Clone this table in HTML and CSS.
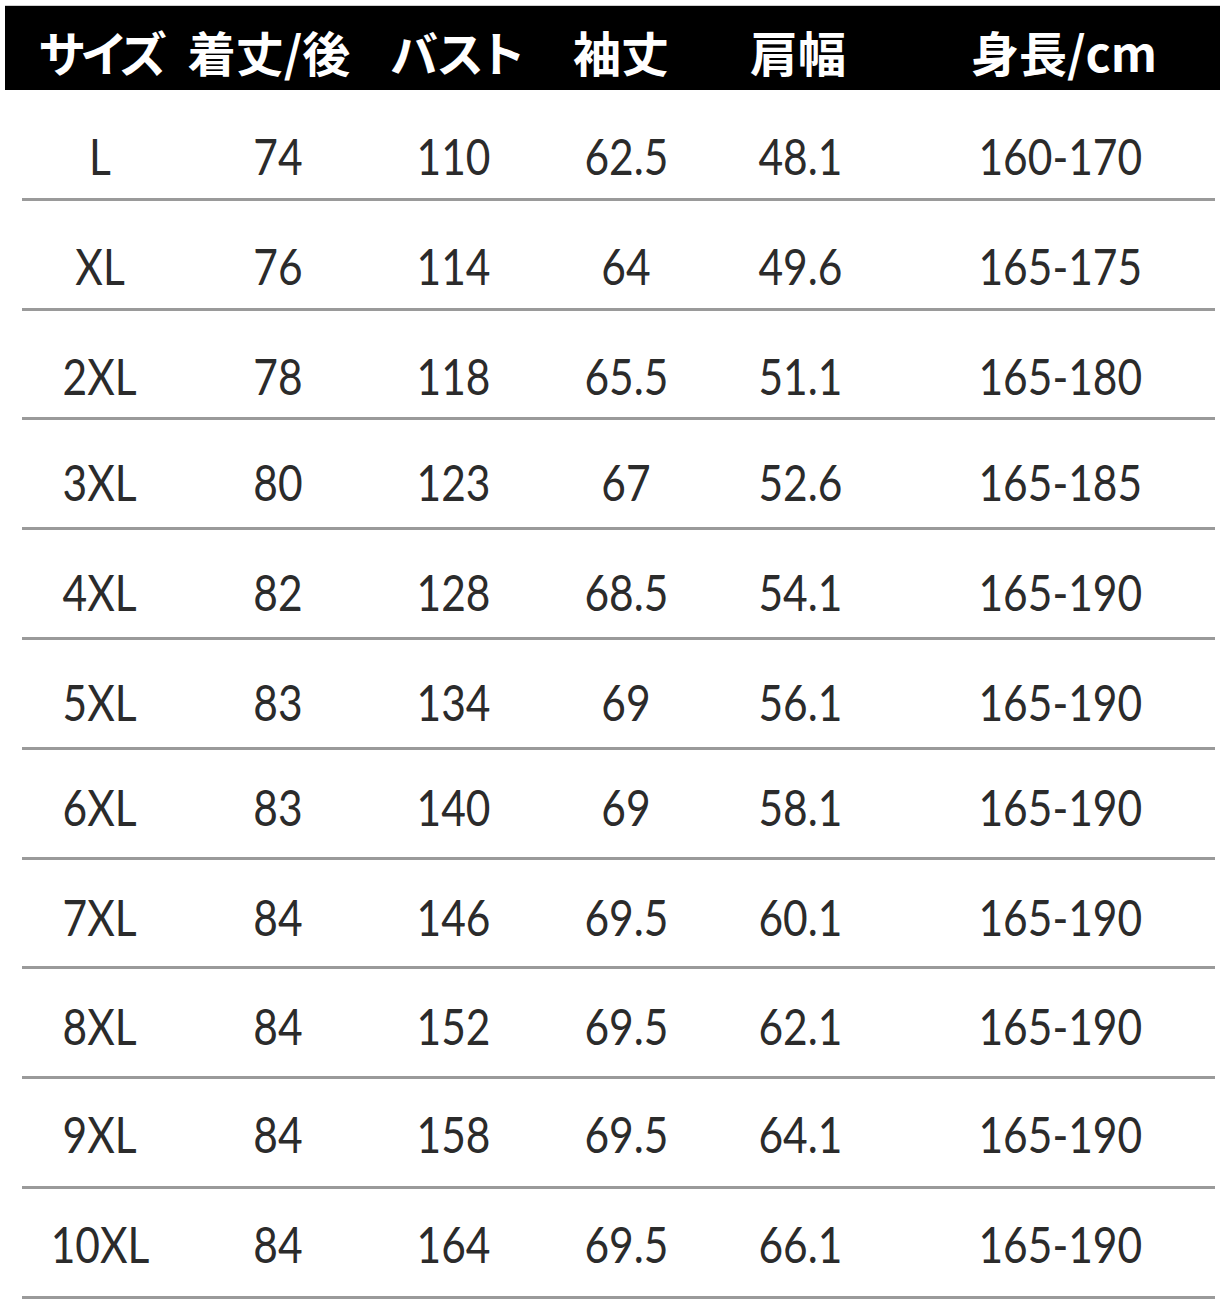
FILE: index.html
```html
<!DOCTYPE html>
<html lang="ja">
<head>
<meta charset="utf-8">
<title>サイズ表</title>
<link rel="stylesheet" href="styles.css">
</head>
<body>
<div class="sheet">
  <div class="head">
    <div class="hc"><span>サイズ</span></div>
    <div class="hc"><span>着丈/後</span></div>
    <div class="hc"><span>バスト</span></div>
    <div class="hc"><span>袖丈</span></div>
    <div class="hc"><span>肩幅</span></div>
    <div class="hc"><span>身長/cm</span></div>
  </div>
  <div class="rows">
    <div class="row"><div class="c"><span>L</span></div><div class="c"><span>74</span></div><div class="c"><span>110</span></div><div class="c"><span>62.5</span></div><div class="c"><span>48.1</span></div><div class="c"><span>160-170</span></div></div>
    <div class="row"><div class="c"><span>XL</span></div><div class="c"><span>76</span></div><div class="c"><span>114</span></div><div class="c"><span>64</span></div><div class="c"><span>49.6</span></div><div class="c"><span>165-175</span></div></div>
    <div class="row"><div class="c"><span>2XL</span></div><div class="c"><span>78</span></div><div class="c"><span>118</span></div><div class="c"><span>65.5</span></div><div class="c"><span>51.1</span></div><div class="c"><span>165-180</span></div></div>
    <div class="row"><div class="c"><span>3XL</span></div><div class="c"><span>80</span></div><div class="c"><span>123</span></div><div class="c"><span>67</span></div><div class="c"><span>52.6</span></div><div class="c"><span>165-185</span></div></div>
    <div class="row"><div class="c"><span>4XL</span></div><div class="c"><span>82</span></div><div class="c"><span>128</span></div><div class="c"><span>68.5</span></div><div class="c"><span>54.1</span></div><div class="c"><span>165-190</span></div></div>
    <div class="row"><div class="c"><span>5XL</span></div><div class="c"><span>83</span></div><div class="c"><span>134</span></div><div class="c"><span>69</span></div><div class="c"><span>56.1</span></div><div class="c"><span>165-190</span></div></div>
    <div class="row"><div class="c"><span>6XL</span></div><div class="c"><span>83</span></div><div class="c"><span>140</span></div><div class="c"><span>69</span></div><div class="c"><span>58.1</span></div><div class="c"><span>165-190</span></div></div>
    <div class="row"><div class="c"><span>7XL</span></div><div class="c"><span>84</span></div><div class="c"><span>146</span></div><div class="c"><span>69.5</span></div><div class="c"><span>60.1</span></div><div class="c"><span>165-190</span></div></div>
    <div class="row"><div class="c"><span>8XL</span></div><div class="c"><span>84</span></div><div class="c"><span>152</span></div><div class="c"><span>69.5</span></div><div class="c"><span>62.1</span></div><div class="c"><span>165-190</span></div></div>
    <div class="row"><div class="c"><span>9XL</span></div><div class="c"><span>84</span></div><div class="c"><span>158</span></div><div class="c"><span>69.5</span></div><div class="c"><span>64.1</span></div><div class="c"><span>165-190</span></div></div>
    <div class="row"><div class="c"><span>10XL</span></div><div class="c"><span>84</span></div><div class="c"><span>164</span></div><div class="c"><span>69.5</span></div><div class="c"><span>66.1</span></div><div class="c"><span>165-190</span></div></div>
  </div>
</div>
</body>
</html>
```

FILE: styles.css
```css
html, body {
  margin: 0;
  padding: 0;
  background: #ffffff;
}

.sheet {
  width: 1226px;
}

.head {
  margin: 5px 0 0 5px;
  width: 1215px;
  height: 85px;
  box-sizing: border-box;
  padding-top: 6px;
  background: #000000;
  border-top: 1px solid #cfcfcf;
  display: grid;
  grid-template-columns: 192px 144px 232px 96px 258px 274px;
  align-items: center;
  color: #ffffff;
  font-family: "Noto Sans CJK JP", "Noto Sans CJK SC", sans-serif;
  font-weight: 700;
  font-size: 48px;
  line-height: 1;
  font-feature-settings: "palt";
}

.hc {
  display: flex;
  justify-content: center;
  white-space: nowrap;
}

.hc:first-child {
  letter-spacing: -3px;
}

.rows {
  margin: 1px 0 0 22px;
  width: 1193px;
}

.row {
  display: grid;
  grid-template-columns: 156px 200px 152px 192px 156px 1fr;
  height: 109.8px;
  box-sizing: border-box;
  padding-top: 35px;
  border-bottom: 3px solid #9a9a9a;
  font-family: Lato, "Open Sans", sans-serif;
  font-weight: 400;
  font-size: 50px;
  line-height: 60px;
  color: #2b2b2b;
}

.row:nth-child(n+4) {
  padding-top: 32px;
}

.row:nth-child(n+7) {
  padding-top: 27px;
}

.row:nth-child(n+10) {
  padding-top: 25px;
}

.c {
  display: flex;
  justify-content: center;
  white-space: nowrap;
}

.c:last-child {
  padding-left: 27px;
}

.c span {
  display: inline-block;
  transform: scaleX(0.85);
}
```
